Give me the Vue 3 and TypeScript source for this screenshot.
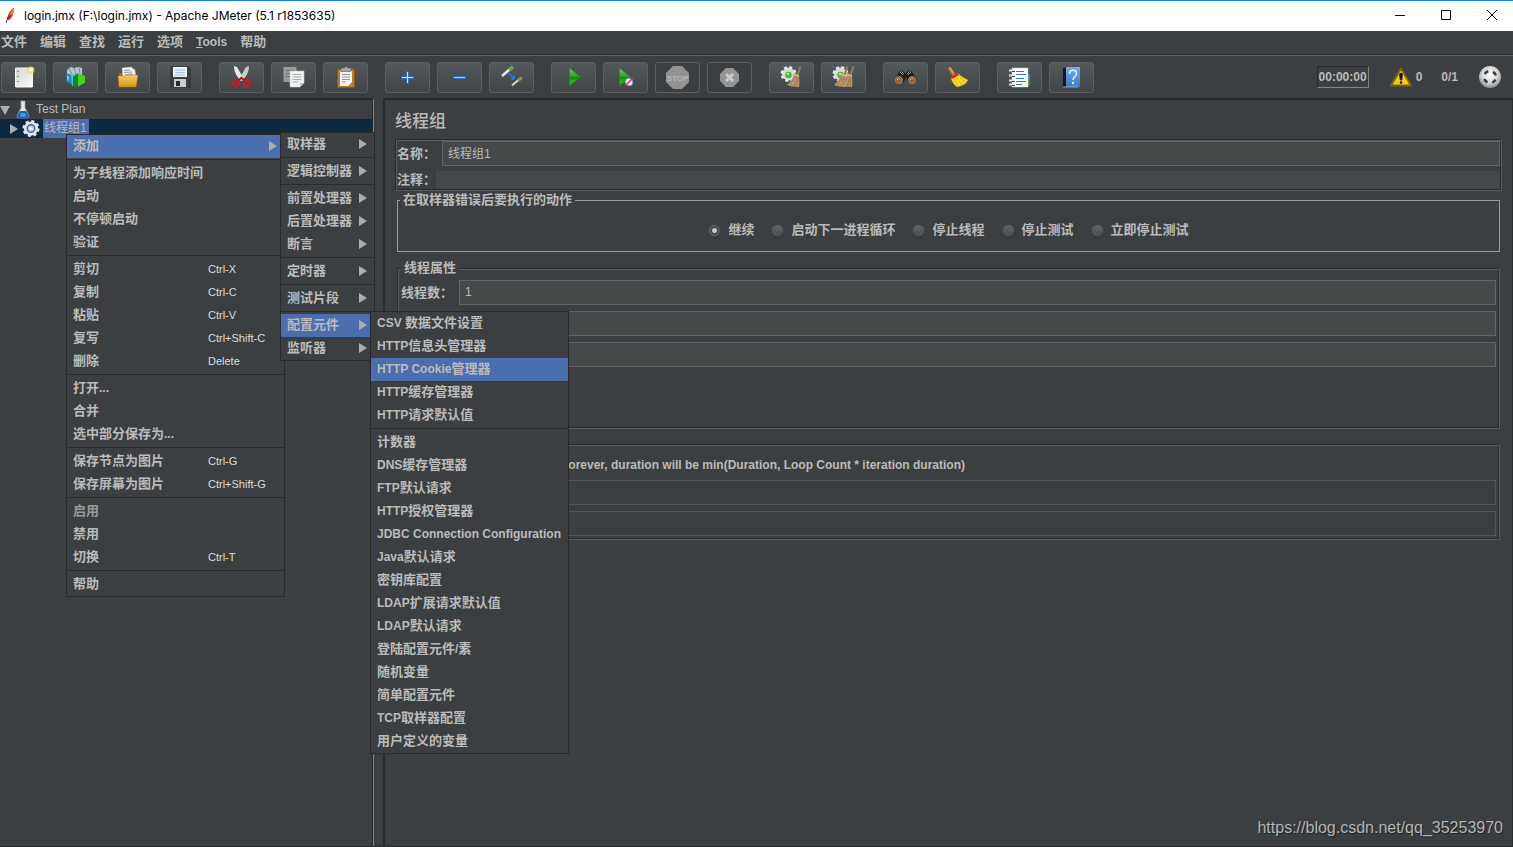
<script setup lang="ts">
import { ref } from 'vue'

interface MenuEntry {
  label: string
  key?: string
  submenu?: boolean
  active?: boolean
  disabled?: boolean
}

interface ToolButton {
  icon: string
  title: string
  disabled?: boolean
}

const menuBar = ['文件', '编辑', '查找', '运行', '选项', 'Tools', '帮助']

const toolGroups: ToolButton[][] = [
  [
    { icon: 'new', title: '新建' },
    { icon: 'templates', title: '模板' },
    { icon: 'open', title: '打开' },
    { icon: 'save', title: '保存' },
  ],
  [
    { icon: 'cut', title: '剪切' },
    { icon: 'copy', title: '复制' },
    { icon: 'paste', title: '粘贴' },
  ],
  [
    { icon: 'expand', title: '展开' },
    { icon: 'collapse', title: '收起' },
    { icon: 'toggle', title: '切换' },
  ],
  [
    { icon: 'start', title: '启动' },
    { icon: 'start-no-timers', title: '不停顿启动' },
    { icon: 'stop', title: '停止', disabled: true },
    { icon: 'shutdown', title: '关闭', disabled: true },
  ],
  [
    { icon: 'clear', title: '清除' },
    { icon: 'clear-all', title: '清除全部' },
  ],
  [
    { icon: 'search', title: '查找' },
    { icon: 'search-reset', title: '重置查找' },
  ],
  [
    { icon: 'functions', title: '函数助手' },
    { icon: 'help', title: '帮助' },
  ],
]

const contextMenu: MenuEntry[][] = [
  [{ label: '添加', submenu: true, active: true }],
  [{ label: '为子线程添加响应时间' }, { label: '启动' }, { label: '不停顿启动' }, { label: '验证' }],
  [
    { label: '剪切', key: 'Ctrl-X' },
    { label: '复制', key: 'Ctrl-C' },
    { label: '粘贴', key: 'Ctrl-V' },
    { label: '复写', key: 'Ctrl+Shift-C' },
    { label: '删除', key: 'Delete' },
  ],
  [{ label: '打开...' }, { label: '合并' }, { label: '选中部分保存为...' }],
  [
    { label: '保存节点为图片', key: 'Ctrl-G' },
    { label: '保存屏幕为图片', key: 'Ctrl+Shift-G' },
  ],
  [{ label: '启用', disabled: true }, { label: '禁用' }, { label: '切换', key: 'Ctrl-T' }],
  [{ label: '帮助' }],
]

const addMenu: MenuEntry[][] = [
  [{ label: '取样器', submenu: true }],
  [{ label: '逻辑控制器', submenu: true }],
  [
    { label: '前置处理器', submenu: true },
    { label: '后置处理器', submenu: true },
    { label: '断言', submenu: true },
  ],
  [{ label: '定时器', submenu: true }],
  [{ label: '测试片段', submenu: true }],
  [
    { label: '配置元件', submenu: true, active: true },
    { label: '监听器', submenu: true },
  ],
]

const configMenu: MenuEntry[][] = [
  [
    { label: 'CSV 数据文件设置' },
    { label: 'HTTP信息头管理器' },
    { label: 'HTTP Cookie管理器', active: true },
    { label: 'HTTP缓存管理器' },
    { label: 'HTTP请求默认值' },
  ],
  [
    { label: '计数器' },
    { label: 'DNS缓存管理器' },
    { label: 'FTP默认请求' },
    { label: 'HTTP授权管理器' },
    { label: 'JDBC Connection Configuration' },
    { label: 'Java默认请求' },
    { label: '密钥库配置' },
    { label: 'LDAP扩展请求默认值' },
    { label: 'LDAP默认请求' },
    { label: '登陆配置元件/素' },
    { label: '随机变量' },
    { label: '简单配置元件' },
    { label: 'TCP取样器配置' },
    { label: '用户定义的变量' },
  ],
]

const popups = [
  { name: 'context', groups: contextMenu },
  { name: 'add', groups: addMenu },
  { name: 'config', groups: configMenu },
]

const errorActions = ['继续', '启动下一进程循环', '停止线程', '停止测试', '立即停止测试']
const errorAction = ref('继续')
const threadName = ref('线程组1')
const comment = ref('')
const threads = ref('1')
const rampUp = ref('')
const loops = ref('')
const duration = ref('')
const delay = ref('')

/** Splits a label into Latin and Chinese runs, which use different text sizes. */
function runs(label: string): { text: string; latin: boolean }[] {
  return (label.match(/[\x20-\x7e]+|[^\x20-\x7e]+/g) ?? []).map((text) => ({
    text,
    latin: /^[\x20-\x7e]/.test(text),
  }))
}
</script>

<template>
  <div class="window">
    <svg class="sprite" aria-hidden="true">
      <defs>
        <linearGradient id="paper" x1="0" y1="0" x2="1" y2="1">
          <stop offset="0" stop-color="#d4d4d4" /><stop offset="1" stop-color="#fafafa" />
        </linearGradient>
        <linearGradient id="gold" x1="0" y1="0" x2="0" y2="1">
          <stop offset="0" stop-color="#f6cf62" /><stop offset="1" stop-color="#d39a1a" />
        </linearGradient>
        <linearGradient id="green" x1="0" y1="0" x2="0" y2="1">
          <stop offset="0" stop-color="#7fd06f" /><stop offset="0.45" stop-color="#2fa32a" /><stop offset="0.55" stop-color="#069006" /><stop offset="0.75" stop-color="#12c912" /><stop offset="1" stop-color="#0a8a0a" />
        </linearGradient>
        <linearGradient id="blue" x1="0" y1="0" x2="0" y2="1">
          <stop offset="0" stop-color="#74aaea" /><stop offset="1" stop-color="#3a78cf" />
        </linearGradient>
        <radialGradient id="ball" cx="0.5" cy="0.4" r="0.6">
          <stop offset="0" stop-color="#ffffff" /><stop offset="0.6" stop-color="#d6d6d6" /><stop offset="1" stop-color="#8a8a8a" />
        </radialGradient>
      </defs>
      <symbol id="new" viewBox="0 0 25 25">
        <path d="M4.500 3h17v19h-17z" fill="url(#paper)" stroke="#f5f5f5" />
        <path d="M7 6v1M7 11v1M7 16v1" stroke="#777" stroke-width="1.500" />
        <circle cx="20" cy="5" r="3.500" fill="#f0df62" opacity="0.8" />
        <circle cx="20" cy="5" r="1.800" fill="#fffdd0" />
      </symbol>
      <symbol id="templates" viewBox="0 0 25 25">
        <path d="M4 5l4-3 3 1 4-1 4 1v7H4z" fill="#b9c6cd" />
        <path d="M6 4l3 5M11 3l2 6M16 3l1 5" stroke="#6f8896" />
        <path d="M3 8l6 2v10l-5-3z" fill="#1c87c9" />
        <path d="M8 10l5-2v12l-4 1z" fill="#55b6e6" />
        <path d="M4 11l1 .5v4" fill="none" stroke="#cfeeff" />
        <path d="M10 12l5-4v13l-5 1z" fill="#128c18" />
        <path d="M15 8l7 3v7l-7 4z" fill="#47cf2e" />
        <path d="M13 22l9-4 1 1-9 3z" fill="#222" opacity="0.4" />
      </symbol>
      <symbol id="open" viewBox="0 0 25 25">
        <path d="M4 8h6l1 2h10v11H4z" fill="#a87412" />
        <path d="M7 3l9-1 4 3 1 8H8z" fill="#f3f3f3" stroke="#bdbdbd" stroke-width="0.500" />
        <path d="M9 5.500l6-.5M9 7.500l8-.5M10 9.500l8-.5" stroke="#999" />
        <path d="M3 11h7l2-1h11l-2 12H4z" fill="url(#gold)" stroke="#a87412" stroke-width="0.500" />
      </symbol>
      <symbol id="save" viewBox="0 0 25 25">
        <path d="M4 2h18l1 1v19H5l-1-1z" fill="#3c4044" stroke="#1f2224" stroke-width="0.600" />
        <path d="M6 2h14v10H6z" fill="#edf2f8" />
        <path d="M8 5h10M8 7.500h10M8 10h10" stroke="#a9bedb" />
        <path d="M7 14h12v8H7z" fill="#c9cccf" />
        <path d="M9 16h4v5H9z" fill="#26292c" />
      </symbol>
      <symbol id="cut" viewBox="0 0 25 25">
        <path d="M5 1l3 1 7 12-3 2C8 12 5 7 5 1z" fill="#e9e9e9" />
        <path d="M20 1l-3 1-7 12 3 2C17 12 20 7 20 1z" fill="#c9c9c9" />
        <ellipse cx="7" cy="18" rx="3" ry="3.500" transform="rotate(25 7 18)" fill="none" stroke="#dc1616" stroke-width="2" />
        <ellipse cx="18" cy="18" rx="3" ry="3.500" transform="rotate(-25 18 18)" fill="none" stroke="#dc1616" stroke-width="2" />
        <path d="M9 15.500l3.500-2.500 3.500 2.500" fill="none" stroke="#c01010" stroke-width="2" />
      </symbol>
      <symbol id="copy" viewBox="0 0 25 25">
        <path d="M2.500 2h13v15h-13z" fill="#989b9c" />
        <path d="M5 5.500h8M5 8.500h8M5 11.500h5" stroke="#6c6f70" />
        <path d="M9 6h14v12l-4 4H9z" fill="#f3f3f3" stroke="#c8c8c8" stroke-width="0.600" />
        <path d="M11.500 9.500h9M11.500 12h9M11.500 14.500h9M11.500 17h6" stroke="#aaa" />
        <path d="M23 18h-4v4z" fill="#bbb" />
      </symbol>
      <symbol id="paste" viewBox="0 0 25 25">
        <path d="M4.500 4h17v18.500h-17z" fill="#c07c1c" stroke="#8b560d" />
        <path d="M7 6h12v15H7z" fill="#f4f4f4" />
        <path d="M9 9.500h8M9 12h8M9 14.500h8M9 17h4" stroke="#999" />
        <path d="M19 17l-4 4h4z" fill="#8d8d8d" />
        <path d="M8 3h3l2-1.500L15 3h3v3.500H8z" fill="#a7a9a7" stroke="#5a5c5a" stroke-width="0.600" />
      </symbol>
      <symbol id="expand" viewBox="0 0 25 25">
        <path d="M11.500 6.500h2v5h5v2h-5v5h-2v-5h-5v-2h5z" fill="#c4e0f7" stroke="#2f6db5" />
      </symbol>
      <symbol id="collapse" viewBox="0 0 25 25">
        <path d="M6.500 11.500h12v2h-12z" fill="#a9cdf0" stroke="#2f6db5" />
      </symbol>
      <symbol id="toggle" viewBox="0 0 25 25">
        <path d="M3 11L11 4" stroke="#e6e8e2" stroke-width="2.500" />
        <path d="M10 5l4-3" stroke="#6da648" stroke-width="3.500" />
        <path d="M13 20.500l7-6" stroke="#d8dad5" stroke-width="2" />
        <path d="M19 15.500l4-3" stroke="#6da648" stroke-width="3" />
        <path d="M3 12l2-1M13 21l2-1" stroke="#999" />
        <path d="M9 8l5 4" stroke="#2b7de0" stroke-width="1.500" />
        <path d="M16 9.500v5h-5z" fill="#2b7de0" />
      </symbol>
      <symbol id="start" viewBox="0 0 25 25">
        <path d="M8.500 3l11 9-11 9z" fill="url(#green)" stroke="#1f8a1f" stroke-width="0.800" />
      </symbol>
      <symbol id="start-no-timers" viewBox="0 0 25 25">
        <path d="M6.500 3l11 9-11 9z" fill="url(#green)" stroke="#1f8a1f" stroke-width="0.800" />
        <circle cx="16" cy="17" r="4" fill="#e9f2fb" stroke="#4f86c6" />
        <path d="M12 21l8-8" stroke="#e02020" stroke-width="1.500" />
      </symbol>
      <symbol id="shutdown" viewBox="0 0 25 25">
        <path d="M9 3h7l6 6v7l-6 6H9l-6-6V9z" fill="#949494" />
        <path d="M9 9l7 7M16 9l-7 7" stroke="#c9c9c9" stroke-width="3" />
      </symbol>
      <symbol id="cog" viewBox="0 0 25 25">
        <circle cx="9.500" cy="9" r="6.500" fill="#d5d8d9" />
        <circle cx="9.500" cy="9" r="6.500" fill="none" stroke="#e6e8e9" stroke-width="3" stroke-dasharray="2.900 2.200" />
        <circle cx="9.500" cy="10" r="3.200" fill="#4cba21" />
        <circle cx="9" cy="9" r="1.200" fill="#b4ef8c" />
      </symbol>
      <symbol id="whisk" viewBox="0 0 25 25">
        <path d="M20.500 1l2 .5-3 9-2-.5z" fill="#9a7850" />
        <path d="M15 9l5 2c0 4 1 7 0 11-5 0-10-1-12-2 3-3 6-6 7-11z" fill="#b8956a" />
        <path d="M16 12l-5 8M18 12l-3 9M19 13l-1 8" stroke="#8d6c46" stroke-width="0.700" />
        <path d="M15 9l5 2" stroke="#d8b98c" stroke-width="1.500" />
      </symbol>
      <symbol id="clear" viewBox="0 0 25 25">
        <use href="#cog" width="25" height="25" /><use href="#whisk" width="25" height="25" />
      </symbol>
      <symbol id="clear-all" viewBox="0 0 25 25">
        <use href="#cog" width="25" height="25" />
        <use href="#whisk" x="-5" width="25" height="25" />
        <use href="#whisk" x="1" width="25" height="25" />
      </symbol>
      <symbol id="search" viewBox="0 0 25 25">
        <path d="M6 7l3-2 3 3h1l3-3 3 2 5 8-4 3-5-1-2-5-2 5-5 1-4-3z" fill="#1c1c1c" />
        <path d="M7 7l3 3M18 7l-3 3M8 6l3 3M17 6l-3 3" stroke="#999" />
        <circle cx="6" cy="15" r="3.500" fill="#a25a26" stroke="#8f8f8f" />
        <circle cx="19" cy="15" r="3.500" fill="#a25a26" stroke="#8f8f8f" />
        <path d="M4 15a2 2 0 0 1 3-1M17 15a2 2 0 0 1 3-1" fill="none" stroke="#e6a66a" />
      </symbol>
      <symbol id="search-reset" viewBox="0 0 25 25">
        <path d="M5 4l4 6" stroke="#a86a28" stroke-width="4" stroke-linecap="round" />
        <path d="M5 3l3 5" stroke="#dfa458" stroke-width="1.500" stroke-linecap="round" />
        <path d="M6 13l7-5c2 3 6 5 10 7-2 4-6 6-11 7-3-2-5-5-6-9z" fill="#f4da2a" stroke="#b99a10" stroke-width="0.500" />
        <path d="M9 14l4 7M12 13l5 7M14 12l6 5" stroke="#c9aa14" stroke-width="0.700" />
        <path d="M6 12l7-4 1 2-7 4z" fill="#d31d1d" />
      </symbol>
      <symbol id="functions" viewBox="0 0 25 25">
        <path d="M20 9h3v6h-3z" fill="#2f7fe0" /><path d="M20 15h3v6h-3z" fill="#219a2c" />
        <path d="M5 3h16v19H5z" fill="#fafafa" stroke="#d0d0d0" stroke-width="0.500" />
        <path d="M9 6.500h8M9 9.500h10M9 13.500h8M9 16.500h10M9 19.500h6" stroke="#2f78d0" />
        <path d="M2 5.500h5M2 10.500h5M2 15.500h5M2 19.500h5" stroke="#e5e5e5" stroke-width="2" />
        <path d="M5 6.500h3M5 11.500h3M5 16.500h3M5 20.500h3" stroke="#444" />
      </symbol>
      <symbol id="help" viewBox="0 0 25 25">
        <path d="M4 3l4-1v19l-4 1z" fill="#15181c" />
        <path d="M7 2h14v20H7z" fill="url(#blue)" />
        <path d="M4 22h15" stroke="#ddd" stroke-width="0.600" />
        <path d="M10.500 9c0-5 7-5 7-.5 0 3-3.500 3-3.500 6.500" fill="none" stroke="#e8f2ff" stroke-width="1.600" />
        <circle cx="14" cy="18" r="1.200" fill="#e8f2ff" />
      </symbol>
      <symbol id="warning" viewBox="0 0 22 20">
        <path d="M11 1.500L21 18.500H1z" fill="#f5cb10" stroke="#7d6508" stroke-width="2" stroke-linejoin="round" />
        <path d="M11 6l1.300 1-.6 6h-1.400l-.6-6z" fill="#111" stroke="#111" />
        <circle cx="11" cy="15.500" r="1.200" fill="#111" />
      </symbol>
      <symbol id="status" viewBox="0 0 22 22">
        <circle cx="11" cy="11" r="11" fill="url(#ball)" />
        <circle cx="11" cy="11" r="6" fill="none" stroke="#3a3a3a" stroke-width="2.500" stroke-dasharray="4.400 5.020" stroke-dashoffset="-2.500" />
      </symbol>
      <symbol id="flask" viewBox="0 0 14 19">
        <path d="M5 1h4v7l4 8q0 2-2 2H3q-2 0-2-2l4-8z" fill="#dfe6ee" stroke="#9aa7b5" stroke-width="0.700" />
        <path d="M4 11h6l3 5q0 2-2 2H3q-2 0-2-2z" fill="#1762c4" />
        <ellipse cx="7" cy="15" rx="3" ry="2" fill="#3f9bf0" />
      </symbol>
      <symbol id="thread-group" viewBox="0 0 20 20">
        <circle cx="10" cy="10" r="5.500" fill="none" stroke="#e4e6e8" stroke-width="4" />
        <circle cx="10" cy="10" r="7.500" fill="none" stroke="#e4e6e8" stroke-width="3" stroke-dasharray="3.200 2.690" />
        <circle cx="10" cy="10" r="4" fill="#b9cde6" stroke="#466b9c" stroke-width="1.500" />
        <path d="M8.500 8l3.500 2-3.500 2z" fill="#fff" />
      </symbol>
    </svg>

    <header class="title-bar">
      <svg class="feather" viewBox="0 0 10 18" aria-hidden="true">
        <path d="M9 1C6 2 3 6 2 13l2 0C7 11 9 6 9 1z" fill="#d22128" />
        <path d="M9 1C7 2 5 5 5 8l2 0C9 5 9 3 9 1z" fill="#f08a24" />
        <path d="M3 10L1 16" stroke="#7b2a6b" />
      </svg>
      <span class="title">login.jmx (F:\login.jmx) - Apache JMeter (5.1 r1853635)</span>
      <div class="window-buttons">
        <button type="button" aria-label="最小化">
          <svg viewBox="0 0 12 12"><path d="M1 5.500h10" stroke="#000" /></svg>
        </button>
        <button type="button" aria-label="最大化">
          <svg viewBox="0 0 12 12"><path d="M1.500 .5h9v9h-9z" fill="none" stroke="#000" /></svg>
        </button>
        <button type="button" aria-label="关闭">
          <svg viewBox="0 0 12 12"><path d="M1 0l10 10M11 0L1 10" stroke="#000" /></svg>
        </button>
      </div>
    </header>

    <nav class="menu-bar">
      <button v-for="item in menuBar" :key="item" type="button" :class="{ latin: item === 'Tools' }">
        <template v-if="item === 'Tools'"><u>T</u>ools</template>
        <template v-else>{{ item }}</template>
      </button>
    </nav>

    <div class="toolbar">
      <div v-for="(group, g) in toolGroups" :key="g" class="tool-group">
        <button v-for="tool in group" :key="tool.icon" type="button" class="tool" :disabled="tool.disabled" :aria-label="tool.title">
          <svg v-if="tool.icon === 'stop'" width="25" height="25" viewBox="0 0 25 25">
            <path d="M8 1h9l7 7v9l-7 7H8l-7-7V8z" fill="#939393" />
            <text x="12.500" y="15.500" text-anchor="middle" class="stop-text">STOP</text>
          </svg>
          <svg v-else width="25" height="25"><use :href="'#' + tool.icon" /></svg>
        </button>
      </div>
      <div class="status">
        <output class="timer">00:00:00</output>
        <button type="button" class="log-count">
          <svg width="22" height="20"><use href="#warning" /></svg>
          <span>0</span>
        </button>
        <span class="thread-count">0/1</span>
        <svg width="22" height="22"><use href="#status" /></svg>
      </div>
    </div>

    <main class="workspace">
      <aside class="tree">
        <div class="node root-node">
          <svg width="10" height="10" viewBox="0 0 10 10"><path d="M0 1h10L5 10z" fill="#adadad" /></svg>
          <svg width="14" height="19"><use href="#flask" /></svg>
          <span class="node-label">Test Plan</span>
        </div>
        <div class="node child-node">
          <svg width="10" height="10" viewBox="0 0 10 10"><path d="M1 0v10l8-5z" fill="#adadad" /></svg>
          <svg width="20" height="19"><use href="#thread-group" /></svg>
          <span class="node-label chosen">线程组1</span>
        </div>
      </aside>

      <section class="editor">
        <h1>线程组</h1>

        <div class="naming">
          <div class="naming-row">
            <label for="name">名称：</label>
            <input id="name" v-model="threadName" type="text" />
          </div>
          <div class="naming-row comment-row">
            <label for="comment">注释：</label>
            <input id="comment" v-model="comment" type="text" />
          </div>
        </div>

        <fieldset class="on-error">
          <legend>在取样器错误后要执行的动作</legend>
          <div class="choices">
            <label v-for="action in errorActions" :key="action">
              <input v-model="errorAction" type="radio" name="on-error" :value="action" />
              {{ action }}
            </label>
          </div>
        </fieldset>

        <fieldset class="etched thread-props">
          <legend>线程属性</legend>
          <div class="fields">
            <label for="threads">线程数：</label>
            <input id="threads" v-model="threads" type="text" />
            <input v-model="rampUp" type="text" aria-label="Ramp-Up" />
            <input v-model="loops" type="text" aria-label="循环次数" />
          </div>
        </fieldset>

        <div class="etched scheduler">
          <p class="latin">Forever, duration will be min(Duration, Loop Count * iteration duration)</p>
          <div class="fields">
            <input v-model="duration" type="text" aria-label="持续时间" disabled />
            <input v-model="delay" type="text" aria-label="启动延迟" disabled />
          </div>
        </div>
      </section>
    </main>

    <div v-for="popup in popups" :key="popup.name" class="popup" :class="popup.name" role="menu">
      <div v-for="(group, g) in popup.groups" :key="g" class="popup-group">
        <button
          v-for="entry in group"
          :key="entry.label"
          type="button"
          role="menuitem"
          class="entry"
          :class="{ active: entry.active }"
          :disabled="entry.disabled"
        >
          <span class="entry-label"><span v-for="(run, r) in runs(entry.label)" :key="r" :class="{ latin: run.latin }">{{ run.text }}</span></span>
          <kbd v-if="entry.key">{{ entry.key }}</kbd>
          <svg v-if="entry.submenu" width="8" height="10" viewBox="0 0 8 10"><path d="M0 0v10l8-5z" fill="#adadad" /></svg>
        </button>
      </div>
    </div>

    <span class="watermark">https://blog.csdn.net/qq_35253970</span>
  </div>
</template>

<style>
body {
  margin: 0;
  background: #3c3f41;
}
</style>

<style scoped>
.window {
  --panel: #3c3f41;
  --dark: #282a2c;
  --light: #5b5e60;
  --text: #bbbbbb;
  --accent: #4b6eaf;
  position: relative;
  display: flex;
  flex-direction: column;
  box-sizing: border-box;
  min-height: 100vh;
  overflow: hidden;
  background: var(--panel);
  color: var(--text);
  font: bold 13px/18px "Liberation Sans", "Noto Sans CJK SC", sans-serif;
  border-bottom: 1px solid var(--dark);
}
.sprite {
  position: absolute;
  width: 0;
  height: 0;
}
svg {
  display: block;
  flex: none;
}
button {
  font: inherit;
  color: inherit;
  background: none;
  border: 0;
  padding: 0;
}
.latin {
  font-size: 12px;
}

.title-bar {
  display: flex;
  align-items: center;
  height: 30px;
  padding: 0 0 0 5px;
  border-top: 1px solid #1883d7;
  background: #fff;
  color: #000;
  font: 12px/18px Inter, "Noto Sans", sans-serif;
}
.feather {
  width: 10px;
  height: 18px;
  margin-right: 9px;
}
.window-buttons {
  display: flex;
  gap: 4px;
  margin-left: auto;
}
.window-buttons button {
  display: grid;
  place-items: center;
  width: 42px;
  height: 28px;
}
.window-buttons svg {
  width: 12px;
  height: 12px;
}

.menu-bar {
  display: flex;
  align-items: center;
  gap: 13px;
  box-sizing: border-box;
  height: 24px;
  padding: 0 0 2px 1px;
  border-bottom: 1px solid var(--dark);
}

.toolbar {
  display: flex;
  align-items: center;
  gap: 17px;
  height: 42px;
  padding: 0 12px 0 1px;
  border-top: 1px solid var(--light);
}
.tool-group {
  display: flex;
  gap: 7px;
}
.tool {
  display: grid;
  place-items: center;
  box-sizing: border-box;
  width: 45px;
  height: 31px;
  border: 1px solid #5c6062;
  border-radius: 3px;
  background: linear-gradient(#53585a, #414547);
}
.tool:disabled {
  background: none;
}
.stop-text {
  font: bold 8px "Liberation Sans", sans-serif;
  fill: #b9b9b9;
}
.status {
  display: flex;
  align-items: center;
  margin-left: auto;
  font-size: 12px;
}
.timer {
  height: 20px;
  line-height: 20px;
  padding: 0 1px;
  border: 1px solid;
  border-color: var(--dark) #818384 #818384 var(--dark);
}
.log-count {
  display: flex;
  align-items: center;
  gap: 4px;
  margin-left: 21px;
}
.thread-count {
  margin: 0 21px 0 19px;
}

.workspace {
  flex: 1;
  display: flex;
  gap: 9px;
}
.tree {
  flex: none;
  box-sizing: border-box;
  width: 374px;
  border-top: 2px solid var(--dark);
  border-right: 1px solid #818384;
  box-shadow: inset -1px 0 var(--dark);
  font-weight: normal;
  font-size: 12px;
}
.node {
  display: flex;
  align-items: center;
  height: 19px;
  margin-right: 1px;
}
.root-node {
  gap: 6px;
}
.child-node {
  gap: 2px;
  padding-left: 9px;
  background: #0d293e;
}
.node-label {
  line-height: 18px;
  padding-bottom: 1px;
}
.chosen {
  padding: 0 2px 1px 1px;
  background: var(--accent);
}

.editor {
  flex: 1;
  min-width: 0;
  padding: 0 10px;
  border: solid var(--dark);
  border-width: 2px 1px 0 2px;
}
h1 {
  margin: 0;
  padding-top: 5px;
  font-size: 17px;
  font-weight: 500;
  line-height: 34px;
}
.naming,
.etched {
  border: 1px solid;
  border-color: var(--dark) var(--light) var(--light) var(--dark);
  box-shadow: inset 1px 1px var(--light), inset -1px -1px var(--dark);
}
.naming {
  display: grid;
  gap: 5px;
  padding: 1px;
}
.naming-row {
  display: flex;
}
.naming-row label {
  flex: none;
  width: 45px;
  line-height: 25px;
}
.comment-row label {
  width: 39px;
  line-height: 18px;
}
input[type='text'] {
  flex: 1;
  min-width: 0;
  box-sizing: border-box;
  height: 25px;
  padding: 0 5px 2px;
  border: 1px solid #646464;
  background: #45494a;
  color: var(--text);
  font: 12px/18px "Liberation Sans", "Noto Sans CJK SC", sans-serif;
}
.comment-row input[type='text'] {
  height: 18px;
  border: 0;
}
input[type='text']:disabled {
  background: var(--panel);
  border-color: #555555;
}
fieldset {
  margin: 0 2px;
  padding: 0 2px;
  min-width: 0;
}
legend {
  height: 18px;
  padding: 0 3px;
  background: var(--panel);
}
.on-error {
  border: 1px solid #999999;
}
.choices {
  display: flex;
  flex-wrap: wrap;
  justify-content: center;
  gap: 17px;
}
.choices label {
  display: flex;
  align-items: center;
  gap: 7px;
  line-height: 42px;
}
input[type='radio'] {
  appearance: none;
  box-sizing: border-box;
  width: 13px;
  height: 13px;
  margin: 0;
  border: 1px solid #46494b;
  border-radius: 50%;
  background: linear-gradient(#5c6163, #4a4f51);
  box-shadow: 0 1px 1px #2c2e30;
}
input[type='radio']:checked {
  background: radial-gradient(circle, #c8c8c8 0 2px, #3c3f41 3px, #55595b 4px);
}
.etched {
  margin: 7px 2px 0;
  padding: 0 3px;
}
.fields {
  display: grid;
  grid-template-columns: 58px 1fr;
  align-items: center;
  gap: 6px 0;
  padding-top: 3px;
}
.fields input[type='text'] {
  grid-column: 2;
}
.thread-props {
  padding-bottom: 61px;
}
.scheduler {
  margin-top: 15px;
  padding: 9px 3px 3px;
}
.scheduler p {
  margin: 0;
  padding-left: 160px;
  line-height: 23px;
  white-space: nowrap;
}

.popup {
  position: absolute;
  box-sizing: border-box;
  border: 1px solid var(--dark);
  background: var(--panel);
}
.context {
  left: 66px;
  top: 134px;
  width: 219px;
}
.add {
  left: 280px;
  top: 132px;
  width: 95px;
}
.config {
  left: 370px;
  top: 311px;
  width: 199px;
}
.popup-group + .popup-group {
  position: relative;
  padding-top: 4px;
}
.popup-group + .popup-group::before {
  content: '';
  position: absolute;
  top: 1px;
  left: 0;
  right: 0;
  height: 1px;
  background: var(--dark);
}
.entry {
  display: flex;
  align-items: center;
  width: 100%;
  height: 23px;
  padding: 0 7px 2px 6px;
  text-align: left;
  white-space: nowrap;
}
.entry.active {
  background: var(--accent);
}
.entry:disabled {
  color: #999999;
}
.entry svg {
  margin-left: auto;
}
.context .entry-label {
  width: 135px;
}
.context .entry svg {
  margin-left: 61px;
}
kbd {
  color: #dddddd;
  font: 11px/18px "Liberation Sans", sans-serif;
}

.watermark {
  position: absolute;
  right: 10px;
  bottom: 6px;
  color: #b4b5b6;
  font: 16px/24px "Liberation Sans", sans-serif;
  text-shadow: 1px 1px 1px #222;
}
</style>
